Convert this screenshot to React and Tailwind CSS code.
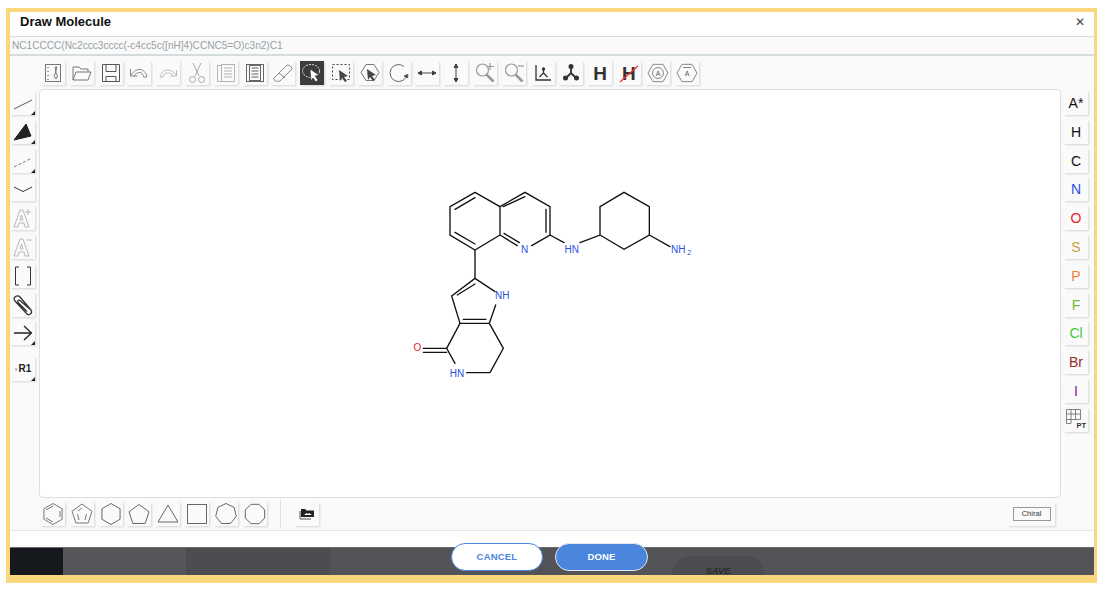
const poly = (n, r, cx = 12, cy = 12, rot = -90) =>
  Array.from({ length: n }, (_, i) => {
    const a = ((rot + (i * 360) / n) * Math.PI) / 180;
    return `${(cx + r * Math.cos(a)).toFixed(2)},${(cy + r * Math.sin(a)).toFixed(2)}`;
  }).join(" ");

const S = ({ children, c = "#666", w = 1 }) => (
  <svg width="24" height="24" viewBox="0 0 24 24" fill="none" stroke={c} strokeWidth={w}>{children}</svg>
);

const Btn = ({ children, corner, active, className = "" }) => (
  <div className={`relative w-6 h-6 shrink-0 flex items-center justify-center shadow-[1px_1px_2px_rgba(0,0,0,0.15)] ${active ? "bg-[#3c3c3c]" : "bg-[#fafafa]"} ${className}`}>
    {children}
    {corner && <div className="absolute right-0 bottom-0 w-0 h-0 border-l-[4px] border-l-transparent border-b-[4px] border-b-[#222]" />}
  </div>
);

const topIcons = [
  <S c="#777"><rect x="4.500" y="3.500" width="15" height="17" /><path d="M7 6v1M7 10v1M7 14v1M7 18v1" stroke="#333" /><path d="M14 6h2l-1.500 5 2 4-1.500 3-2-3 2-4-1-5z" /></S>,
  <S c="#777"><path d="M3 19V6h6l2 2h7v3" /><path d="M3 19l3-8h15l-3 8z" /></S>,
  <S c="#555"><path d="M3.500 3.500h17v17h-17z" /><path d="M7 3.500v7h10v-7M7 20.500v-5h10v5" /></S>,
  <S c="#888"><path d="M3.500 8v7h7" /><path d="M4 14.500c3-5 6-6 9-6s6 3 7 7l-3 1c-1-3-2-5-4-5s-5 1-6 4" /></S>,
  <S c="#bbb"><path d="M20.500 9v6h-6" /><path d="M20 14c-3-4-6-5-9-5s-6 3-7 7l3 0c1-3 2-4 4-4s5 0 6 3" /></S>,
  <S c="#aaa"><path d="M8 2l6 13M16 2l-6 13" /><circle cx="7.500" cy="18.500" r="3" /><circle cx="16.500" cy="18.500" r="3" /></S>,
  <S c="#b5b5b5"><rect x="3.500" y="4.500" width="13" height="16" /><rect x="7.500" y="3.500" width="13" height="17" fill="#fafafa" /><path d="M10 7h8M10 10h8M10 13h8M10 16h8" /></S>,
  <S c="#666"><rect x="3.500" y="3.500" width="17" height="17" /><rect x="6.500" y="4.500" width="11" height="15" /><path d="M8.500 7h7M8.500 10h7M8.500 13h7M8.500 16h7" /></S>,
  <S c="#888"><path d="M3 17L15 5c2-2 6 0 6 3L9 20c-3 1-7 0-6-3z" /><path d="M8 12l6 5" /></S>,
  <S c="#ddd"><ellipse cx="11" cy="10" rx="8.500" ry="6.500" strokeDasharray="2 1" /><path d="M10 8l9 6-4 1 3 4-2 2-3-4-2 3z" fill="#fff" stroke="#222" strokeWidth="0.6" /></S>,
  <S c="#444"><rect x="3.500" y="3.500" width="17" height="15" strokeDasharray="2 2" /><path d="M10 9l9 6-4 1 3 4-2 1-3-4-2 3z" fill="#444" stroke="none" /></S>,
  <S c="#777"><path d="M8 3.500h8l5 8-5 8H8l-5-8z" /><path d="M9 8l9 6-4 1 3 4-2 1-3-4-2 3z" fill="#444" stroke="none" /></S>,
  <S c="#666"><path d="M20 13a8.500 8.500 0 1 1-3-7.500" /><path d="M20.500 17l-3.500-2 4-1.500z" fill="#333" /></S>,
  <S c="#444"><path d="M3 12h18" /><path d="M3 12l3.500-2v4zM21 12l-3.500-2v4z" fill="#333" /></S>,
  <S c="#444"><path d="M12 3v18" /><path d="M12 3l-2 3.500h4zM12 21l-2-3.500h4z" fill="#333" /></S>,
  <S c="#999" w="1.200"><circle cx="9.500" cy="9" r="6" /><path d="M13.500 13.500l7 7" strokeWidth="2.600" /><path d="M17 2v7M14 5.500h7" /></S>,
  <S c="#999" w="1.200"><circle cx="9.500" cy="9" r="6" /><path d="M13.500 13.500l7 7" strokeWidth="2.600" /><path d="M16 5h6" /></S>,
  <S c="#333" w="1.300"><path d="M5 4v15h15" /><path d="M12.500 8v4l-4 4M12.500 12l4 4" /><circle cx="12.500" cy="8" r="1" fill="#333" /></S>,
  <S c="#333" w="1.800"><path d="M12 12V5M12 12l-5 5M12 12l5 5" /><circle cx="12" cy="5.500" r="1.600" fill="#333" /><circle cx="6.500" cy="17" r="1.600" fill="#333" /><circle cx="17.500" cy="17" r="1.600" fill="#333" /></S>,
  <span className="text-[19px] leading-none font-bold text-[#333] font-['Liberation_Sans',sans-serif]">H</span>,
  <span className="relative text-[19px] leading-none font-bold text-[#333] font-['Liberation_Sans',sans-serif]">
    H
    <svg className="absolute -left-[3px] top-0" width="20" height="20" viewBox="0 0 20 20"><path d="M1 18L19 2" stroke="#e33" strokeWidth="1.300" /></svg>
  </span>,
  <S c="#888"><polygon points={poly(6, 10, 12, 12, 0)} /><circle cx="12" cy="12" r="5.500" /><text x="12" y="14.500" textAnchor="middle" fontSize="7" fill="#555" stroke="none" fontFamily="Liberation Sans">A</text></S>,
  <S c="#888"><polygon points={poly(6, 10, 12, 12, 0)} /><path d="M8 6.500h8" /><text x="12" y="15" textAnchor="middle" fontSize="7" fill="#555" stroke="none" fontFamily="Liberation Sans">A</text></S>,
];

const leftIcons = [
  { i: <S c="#333" w="0.800"><path d="M3 18L21 9" /></S>, corner: true },
  { i: <S c="#222"><path d="M3 20L15 4l5 12z" fill="#222" /></S>, corner: true },
  { i: <S c="#555" w="0.800"><path d="M3 18L21 9" strokeDasharray="3 2" /></S>, corner: true },
  { i: <S c="#333"><path d="M3 10l9 4.500 9-4.500" /></S> },
  { i: <S c="#aaa" w="0.800"><path d="M3 21L9 4h3l6 17h-4l-1-4H8l-1 4zM9 14h3l-1.500-5z" /><path d="M17 3v6M14 6h6" /></S> },
  { i: <S c="#aaa" w="0.800"><path d="M3 21L9 4h3l6 17h-4l-1-4H8l-1 4zM9 14h3l-1.500-5z" /><path d="M15 5h6" /></S> },
  { i: <S c="#333" w="1"><path d="M8 3H4.500v18H8M16 3h3.500v18H16" /></S> },
  { i: <S c="#333" w="1.300"><path d="M20 17L9 4C6 1 1 5 4 8l12 13c2 2 6-1 4-4L9 7.500c-1-1-3 0-2 2l9 9" /></S> },
  { i: <S c="#222" w="1.300"><path d="M3 12h17M13 5l7.500 7-7.500 7" /></S>, corner: true },
];

const elements = [
  ["A*", "#111"], ["H", "#111"], ["C", "#111"], ["N", "#2b4de8"], ["O", "#ee2222"], ["S", "#c7a13f"],
  ["P", "#ee8033"], ["F", "#73b833"], ["Cl", "#45c93a"], ["Br", "#9b2a2a"], ["I", "#8b1a9b"],
];

const rings = [
  <S c="#777"><polygon points={poly(6, 10.500)} /><path d="M5 8l7-4M19 9v6M5 16l7 4" /></S>,
  <S c="#777"><polygon points={poly(5, 10.500, 12, 12.500)} /><path d="M9 18l-1.500-6M15 18l1.500-6M8 9l4-3" /></S>,
  <S c="#666"><polygon points={poly(6, 10.500)} /></S>,
  <S c="#666"><polygon points={poly(5, 10.500, 12, 13)} /></S>,
  <S c="#666"><polygon points="12,3 22,20 2,20" /></S>,
  <S c="#666"><rect x="2.500" y="2.500" width="19" height="19" /></S>,
  <S c="#666"><polygon points={poly(7, 10.500)} /></S>,
  <S c="#666"><polygon points={poly(8, 10.500, 12, 12, -67.500)} /></S>,
];

const B = "#111";
const Molecule = () => (
  <svg className="absolute left-[360px] top-[90px]" width="300" height="200" viewBox="0 0 900 600" fill="none" stroke={B} strokeWidth="4" strokeLinecap="round">
    <path d="M225 37L300 80L375 37L450 80L450 165L395 197M352 197L300 165L300 80M300 165L225 210L150 165L150 80L225 37" />
    <path d="M165 88L225 53M165 157L225 192M310 80L375 50M438 88L438 157M312 160L358 188" />
    <path d="M450 165L492 188M540 188L600 165L600 80L672 37L748 80L748 165L672 208L600 165M748 165L810 200" />
    <path d="M225 210L225 295L155 348L180 430L268 430L287 375M225 295L285 335M172 345L225 312M190 418L258 418" />
    <path d="M180 430L140 505L165 550M200 578L270 578L310 505L268 430M140 505L70 505M140 517L70 517" />
    <g fontFamily="Liberation Sans, sans-serif" fontSize="30" stroke="none" fill="#2f4fe0" textAnchor="middle">
      <text x="374" y="219">N</text>
      <text x="515" y="219">HN</text>
      <text x="307" y="358">NH</text>
      <text x="171" y="590">HN</text>
      <text x="835" y="219">NH</text>
      <text x="868" y="226" fontSize="22">2</text>
      <text x="52" y="514" fill="#ee2222">O</text>
    </g>
  </svg>
);

export default function App() {
  return (
    <div className="w-[1108px] h-[592px] bg-white pl-[6px] pt-[8px] font-['Liberation_Sans',sans-serif] overflow-hidden">
      <div className="relative w-[1091px] h-[575px] border-[#f9d77a] border-l-[4px] border-t-[4px] border-r-[3px] border-b-[8px] flex flex-col bg-white">
        <div className="h-[25px] shrink-0 flex items-center justify-between pl-[10px] pr-[9px] border-b border-[#d5dcdf]">
          <span className="text-[13px] font-bold text-[#111] pb-[4px]">Draw Molecule</span>
          <span className="text-[12px] leading-none text-[#444] pb-[4px]">✕</span>
        </div>
        <div className="h-[19px] shrink-0 flex items-center pl-[2px] text-[10.100px] text-[#98a0a4] bg-[#fafafa] border-b-2 border-[#d5dcdf]">
          NC1CCCC(Nc2ccc3cccc(-c4cc5c([nH]4)CCNC5=O)c3n2)C1
        </div>
        <div className="flex-1 flex flex-col bg-[#fafafa]">
          <div className="h-[33px] shrink-0 flex items-start pt-[5px] pl-[31px] gap-[4.800px]">
            {topIcons.map((icon, i) => (
              <Btn key={i} active={i === 9}>{icon}</Btn>
            ))}
          </div>
          <div className="h-[409px] shrink-0 flex">
            <div className="w-[29px] shrink-0 flex flex-col pl-[1px] pt-[2px] gap-[4.800px]">
              {leftIcons.map((b, i) => (
                <Btn key={i} corner={b.corner}>{b.i}</Btn>
              ))}
              <Btn corner className="mt-[7px]">
                <span className="text-[10px] font-bold text-[#222] leading-none whitespace-nowrap">
                  <span className="font-normal text-[#666] text-[8px] pr-[1px]">›</span>R1
                </span>
              </Btn>
            </div>
            <div className="relative w-[1022px] shrink-0 bg-white border border-[#dfdfdf] rounded-[4px]">
              <Molecule />
            </div>
            <div className="flex-1 flex flex-col pl-[3px] pt-[2px] gap-[4.800px]">
              {elements.map(([t, c]) => (
                <Btn key={t}>
                  <span className="text-[14px] leading-none" style={{ color: c }}>{t}</span>
                </Btn>
              ))}
              <Btn>
                <div className="relative w-6 h-6">
                  <svg width="24" height="24" viewBox="0 0 24 24" fill="none" stroke="#666" strokeWidth="0.800"><path d="M2.500 1.500h14v10h-14zM7 1.500v14M11.500 1.500v10M2.500 6h14M2.500 11.500v4H7" /></svg>
                  <span className="absolute right-[2px] bottom-[2px] text-[7.500px] leading-none font-bold text-[#333]">PT</span>
                </div>
              </Btn>
            </div>
          </div>
          <div className="h-[33px] shrink-0 flex items-start pt-[4px] pl-[31px] gap-[4.800px] border-b border-[#e2e6e8]">
            {rings.map((icon, i) => (
              <Btn key={i}>{icon}</Btn>
            ))}
            <div className="w-px h-[28px] bg-[#e0e0e0] ml-[9px] -mt-[2px] shrink-0" />
            <Btn className="ml-[9px]">
              <svg width="16" height="16" viewBox="0 0 16 16"><path d="M2 11V3h4l1.500 1.500H15V11z" fill="#222" /><path d="M1 5v8h11" stroke="#555" fill="none" /><path d="M5 9l2.500-2 1.500 1 1-1 3 2z" fill="#fff" /></svg>
            </Btn>
            <div className="ml-auto mr-[39px] w-[47px] h-6 flex items-center justify-center bg-[#fafafa] shadow-[1px_1px_2px_rgba(0,0,0,0.15)]">
              <div className="w-[38px] h-[14px] flex items-center justify-center border border-[#999] text-[7.500px] text-[#333]">Chiral</div>
            </div>
          </div>
        </div>
        <div className="h-[16px] shrink-0 bg-white" />
        <div className="h-[28px] shrink-0 flex border-t border-[#6a6a6a] bg-[#55575a]">
          <div className="w-[53px] bg-[#15181d]" />
          <div className="w-[123px] bg-[#55575a]" />
          <div className="w-[144px] bg-[#4b4d50]" />
          <div className="flex-1 bg-[#525457]" />
        </div>
        <div className="absolute left-[662px] top-[544px] w-[92px] h-[19px] rounded-t-[18px] bg-[#4a4c4f] flex justify-center pt-[8px] text-[9.500px] italic font-bold text-[#2b2c2e]">SAVE</div>
        <div className="absolute left-[441px] top-[531px] flex gap-[12px]">
          <button className="w-[92px] h-[28px] pt-[1px] rounded-[14px] bg-white border border-[#4a86de] text-[#4a86de] text-[9.500px] font-bold tracking-[0.2px]">CANCEL</button>
          <button className="w-[93px] h-[28px] pt-[1px] rounded-[14px] bg-[#4a86de] border border-[#dfe7f2] text-white text-[9.500px] font-bold tracking-[0.2px]">DONE</button>
        </div>
      </div>
    </div>
  );
}
